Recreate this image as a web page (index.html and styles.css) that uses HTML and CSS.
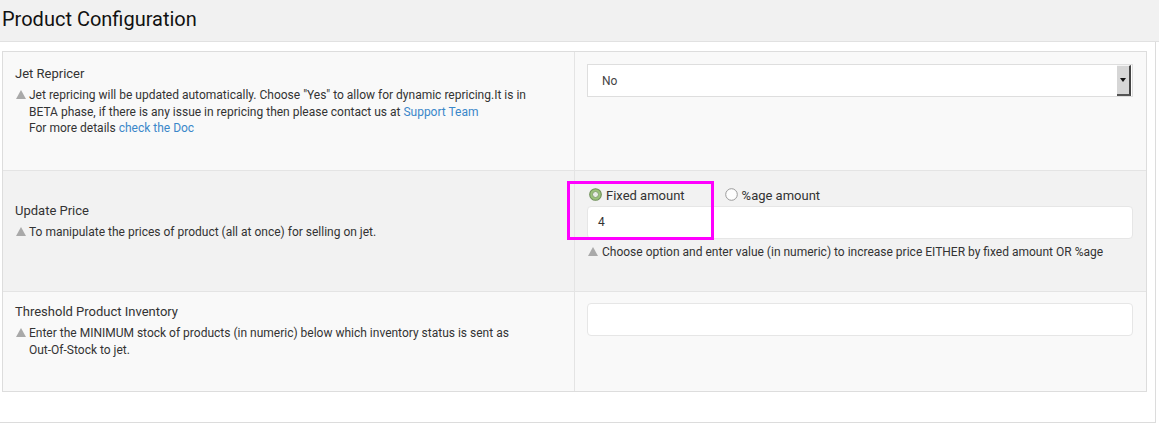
FILE: index.html
```html
<!DOCTYPE html>
<html>
<head>
<meta charset="utf-8">
<link rel="stylesheet" href="styles.css">
</head>
<body>
<div class="header"><h1 class="title">Product Configuration</h1></div>
<div class="panel">
  <div class="config">
    <div class="row row-odd">
      <div class="cell-label cell-top">
        <div class="label">Jet Repricer</div>
        <div class="desc"><span class="tri"></span><span>Jet repricing will be updated automatically. Choose "Yes" to allow for dynamic repricing.It is in</span><br><span>BETA phase, if there is any issue in repricing then please contact us at</span> <a class="link">Support Team</a><br><span>For more details</span> <a class="link">check the Doc</a></div>
      </div>
      <div class="cell-value">
        <div class="select">
          <span class="select-text">No</span>
          <span class="select-btn"><span class="arrow"></span></span>
        </div>
      </div>
    </div>
    <div class="row row-even">
      <div class="cell-label cell-mid">
        <div class="label">Update Price</div>
        <div class="desc"><span class="tri"></span>To manipulate the prices of product (all at once) for selling on jet.</div>
      </div>
      <div class="cell-value cell-price">
        <div class="radios">
          <label class="radio">
            <svg class="radio-icon" width="13" height="13" viewBox="0 0 13 13"><circle cx="6.5" cy="6.5" r="5.8" fill="#9cc37a" stroke="#6f8f5a" stroke-width="1.1"/><circle cx="6.5" cy="6.5" r="3" fill="#e9ece6" stroke="#7c9a66" stroke-width="0.9"/></svg>
            <span>Fixed amount</span>
          </label>
          <label class="radio radio-second">
            <svg class="radio-icon" width="13" height="13" viewBox="0 0 13 13"><circle cx="6.5" cy="6.5" r="5.8" fill="#fdfdfd" stroke="#9a9a9a" stroke-width="1"/></svg>
            <span>%age amount</span>
          </label>
        </div>
        <div class="input">4</div>
        <div class="help"><span class="tri"></span>Choose option and enter value (in numeric) to increase price EITHER by fixed amount OR %age</div>
        <div class="highlight"></div>
      </div>
    </div>
    <div class="row row-odd row-last">
      <div class="cell-label cell-top3">
        <div class="label">Threshold Product Inventory</div>
        <div class="desc desc-narrow"><span class="tri"></span>Enter the MINIMUM stock of products (in numeric) below which inventory status is sent as Out-Of-Stock to jet.</div>
      </div>
      <div class="cell-value cell-inv">
        <div class="input input-empty"></div>
      </div>
    </div>
  </div>
</div>
</body>
</html>
```
FILE: styles.css
```css
* { box-sizing: border-box; }
html, body { margin: 0; padding: 0; background: #fff; }
body {
  font-family: Roboto, "Liberation Sans", sans-serif;
  color: #333;
  width: 1159px;
  height: 424px;
  overflow: hidden;
}
.header {
  background: #f1f1f1;
  height: 42px;
  border-bottom: 1px solid #e1e1e1;
  padding: 5px 0 0 2px;
}
.title {
  margin: 0;
  font-size: 20px;
  font-weight: 400;
  color: #111;
  line-height: 28px;
}
.panel {
  width: 1156px;
  border-right: 1px solid #dcdcdc;
  border-bottom: 1px solid #dcdcdc;
  padding: 9px 0 30px 2px;
}
.config {
  width: 1145px;
  border: 1px solid #dddddd;
}
.row {
  display: grid;
  grid-template-columns: 572px 1fr;
  border-bottom: 1px solid #e4e4e4;
}
.row-last { border-bottom: none; }
.row-odd { background: #f9f9f9; }
.row-even { background: #f2f2f2; }
.row:nth-child(1) { height: 119px; }
.row:nth-child(2) { height: 121px; }
.row:nth-child(3) { height: 99px; }
.cell-label {
  padding: 13px 40px 0 12px;
  border-right: 1px solid #e4e4e4;
}
.cell-top { padding-top: 14px; }
.cell-mid { padding-top: 32px; }
.cell-top3 { padding-top: 12px; }
.label {
  font-size: 13px;
  line-height: 16px;
  margin-bottom: 5px;
  color: #333;
}
.desc {
  font-size: 12px;
  line-height: 16.5px;
  padding-left: 14px;
  position: relative;
  color: #333;
}
.desc-narrow { padding-right: 14px; }
.tri {
  display: inline-block;
  width: 0;
  height: 0;
  border-left: 5.5px solid transparent;
  border-right: 5.5px solid transparent;
  border-bottom: 9px solid #a9a9a9;
  position: absolute;
  left: 1px;
  top: 3px;
}
.link { color: #3a87c9; text-decoration: none; }
.cell-value {
  padding: 12px 13px 0 12px;
  position: relative;
}
.select {
  height: 33px;
  background: #fff;
  border: 1px solid #dedede;
  display: flex;
  align-items: center;
  justify-content: space-between;
  padding-left: 14px;
  font-size: 12px;
  color: #444;
}
.select-btn {
  width: 14px;
  height: 31px;
  background: #d6d6d6;
  border-right: 2px solid #444;
  border-bottom: 2px solid #555;
  border-top: 1px solid #f4f4f4;
  display: flex;
  align-items: center;
  justify-content: center;
  margin-right: 1px;
  align-self: flex-start;
}
.arrow {
  width: 0;
  height: 0;
  border-left: 3px solid transparent;
  border-right: 3px solid transparent;
  border-top: 4px solid #111;
}
.cell-price { padding-top: 15px; }
.radios {
  display: flex;
  align-items: center;
  height: 19px;
  font-size: 13px;
  color: #333;
}
.radio { display: flex; align-items: center; gap: 4px; margin-left: 2px; }
.radio-icon { position: relative; top: -1px; }
.radio-second { margin-left: 40px; }
.input {
  margin-top: 1px;
  height: 33px;
  background: #fff;
  border: 1px solid #e6e6e6;
  border-radius: 4px;
  font-size: 12px;
  color: #333;
  padding: 7px 10px;
  line-height: 17px;
}
.help {
  margin-top: 5px;
  font-size: 12px;
  line-height: 16px;
  padding-left: 15px;
  position: relative;
  color: #333;
}
.help .tri { left: 1px; top: 3px; }
.highlight {
  position: absolute;
  left: -8px;
  top: 10px;
  width: 147px;
  height: 59px;
  border: 3px solid #ff00ff;
  pointer-events: none;
}
.cell-inv { padding-top: 11px; }
.input-empty { margin-top: 0; }
```
